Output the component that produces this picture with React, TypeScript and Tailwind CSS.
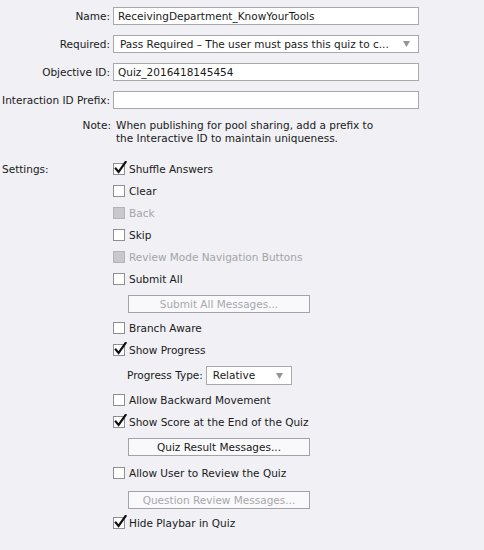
const font = { fontFamily: '"DejaVu Sans", "Liberation Sans", sans-serif' }

function Field({ label, value }: { label: string; value: string }) {
  return (
    <div className="flex items-center h-[18px]">
      <div className="w-[111px] text-right pr-[1px] whitespace-nowrap">{label}</div>
      <div className="ml-[2px] w-[306px] h-[18px] bg-white border border-[#a9a9ad] flex items-center pl-[4px] whitespace-nowrap overflow-hidden">
        {value}
      </div>
    </div>
  )
}

function Arrow() {
  return (
    <svg width="7" height="6" viewBox="0 0 7 6" className="shrink-0">
      <path d="M0 0 L7 0 L3.5 6 Z" fill="#94949a" />
    </svg>
  )
}

function Check({ label, checked = false, disabled = false }: { label: string; checked?: boolean; disabled?: boolean }) {
  return (
    <div className="flex items-center h-[22px]">
      <div
        className={`relative w-[12px] h-[12px] border ${
          disabled ? 'bg-[#c9c9cc] border-[#b4b4b8]' : 'bg-white border-[#8e8e94]'
        }`}
      >
        {checked && (
          <svg width="14" height="14" viewBox="0 0 14 14" className="absolute left-[0px] top-[-3px]">
            <path d="M1.8 7.6 L4.6 11 L11.6 1" fill="none" stroke="#111" strokeWidth="2.2" strokeLinecap="square" />
          </svg>
        )}
      </div>
      <span className={`ml-[4px] whitespace-nowrap ${disabled ? 'text-[#a4a4a8]' : 'text-[#1a1a1a]'}`}>{label}</span>
    </div>
  )
}

function Btn({ label, disabled = false }: { label: string; disabled?: boolean }) {
  return (
    <div
      className={`ml-[15px] w-[182px] h-[18px] border border-[#a2a2a8] bg-[#f9f9fb] flex items-center justify-center whitespace-nowrap ${
        disabled ? 'text-[#a8a8ac]' : 'text-[#1a1a1a]'
      }`}
    >
      {label}
    </div>
  )
}

export default function App() {
  return (
    <div className="w-[484px] h-[550px] bg-[#f0f0f5] text-[#1a1a1a] text-[10.5px] leading-[13px] overflow-hidden" style={font}>
      <div className="pt-[7px] flex flex-col gap-[10px]">
        <Field label="Name:" value="ReceivingDepartment_KnowYourTools" />
        <div className="flex items-center h-[18px]">
          <div className="w-[111px] text-right pr-[1px] whitespace-nowrap">Required:</div>
          <div className="ml-[2px] w-[306px] h-[18px] bg-white border border-[#a9a9ad] flex items-center pl-[6px] pr-[8px] whitespace-nowrap overflow-hidden">
            <span className="flex-1 overflow-hidden">Pass Required – The user must pass this quiz to c...</span>
            <Arrow />
          </div>
        </div>
        <Field label="Objective ID:" value="Quiz_2016418145454" />
        <Field label="Interaction ID Prefix:" value="" />
      </div>

      <div className="mt-[10px] flex">
        <div className="w-[111px] text-right">Note:</div>
        <div className="ml-[5px]">
          <div>When publishing for pool sharing, add a prefix to</div>
          <div>the Interactive ID to maintain uniqueness.</div>
        </div>
      </div>

      <div className="mt-[13px] flex">
        <div className="w-[113px] pl-[2px] h-[22px] flex items-center">Settings:</div>
        <div className="flex flex-col">
          <Check label="Shuffle Answers" checked />
          <Check label="Clear" />
          <Check label="Back" disabled />
          <Check label="Skip" />
          <Check label="Review Mode Navigation Buttons" disabled />
          <Check label="Submit All" />
          <div className="mt-[5px]">
            <Btn label="Submit All Messages..." disabled />
          </div>
          <div className="mt-[4px]">
            <Check label="Branch Aware" />
          </div>
          <Check label="Show Progress" checked />
          <div className="mt-[5px] h-[19px] flex items-center">
            <span className="ml-[14px] whitespace-nowrap">Progress Type:</span>
            <div className="ml-[3px] w-[86px] h-[19px] bg-white border border-[#a9a9ad] flex items-center pl-[6px] pr-[8px]">
              <span className="flex-1">Relative</span>
              <Arrow />
            </div>
          </div>
          <div className="mt-[4px]">
            <Check label="Allow Backward Movement" />
          </div>
          <Check label="Show Score at the End of the Quiz" checked />
          <div className="mt-[5px]">
            <Btn label="Quiz Result Messages..." />
          </div>
          <div className="mt-[6px]">
            <Check label="Allow User to Review the Quiz" />
          </div>
          <div className="mt-[7px]">
            <Btn label="Question Review Messages..." disabled />
          </div>
          <div className="mt-[3px]">
            <Check label="Hide Playbar in Quiz" checked />
          </div>
        </div>
      </div>
    </div>
  )
}
